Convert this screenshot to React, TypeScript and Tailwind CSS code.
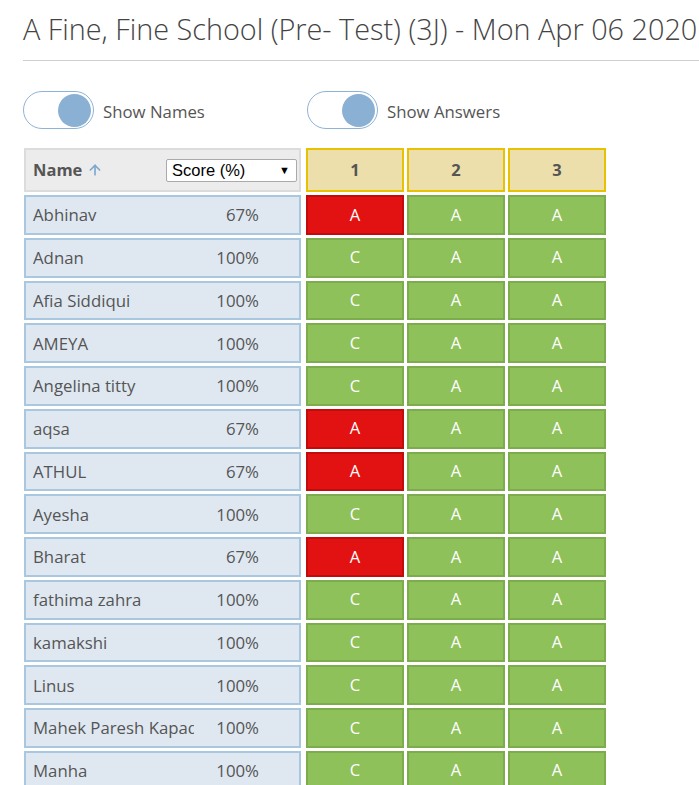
import { ArrowUp } from "lucide-react"

interface Row {
  name: string
  score: string
  answers: string[]
}

const rows: Row[] = [
  { name: "Abhinav", score: "67%", answers: ["A", "A", "A"] },
  { name: "Adnan", score: "100%", answers: ["C", "A", "A"] },
  { name: "Afia Siddiqui", score: "100%", answers: ["C", "A", "A"] },
  { name: "AMEYA", score: "100%", answers: ["C", "A", "A"] },
  { name: "Angelina titty", score: "100%", answers: ["C", "A", "A"] },
  { name: "aqsa", score: "67%", answers: ["A", "A", "A"] },
  { name: "ATHUL", score: "67%", answers: ["A", "A", "A"] },
  { name: "Ayesha", score: "100%", answers: ["C", "A", "A"] },
  { name: "Bharat", score: "67%", answers: ["A", "A", "A"] },
  { name: "fathima zahra", score: "100%", answers: ["C", "A", "A"] },
  { name: "kamakshi", score: "100%", answers: ["C", "A", "A"] },
  { name: "Linus", score: "100%", answers: ["C", "A", "A"] },
  { name: "Mahek Paresh Kapadia", score: "100%", answers: ["C", "A", "A"] },
  { name: "Manha", score: "100%", answers: ["C", "A", "A"] },
]

// correct answer for each question
const key = ["C", "A", "A"]

function Toggle({ label }: { label: string }) {
  return (
    <div className="flex items-center">
      <div className="w-[71px] h-[38px] rounded-full border border-[#8fb3d4] bg-white flex items-center justify-end pr-[2px]">
        <div className="w-[33px] h-[33px] rounded-full bg-[#8ab0d3]" />
      </div>
      <span className="ml-[9px] text-[16.8px] text-[#555] leading-[24px] pt-[3px]">{label}</span>
    </div>
  )
}

export default function App() {
  return (
    <div className="w-[699px] h-[785px] overflow-hidden bg-white font-['Open_Sans',sans-serif]">
      <div className="pl-[23px] pt-[9px]">
        <h1 className="text-[28.8px] font-light text-[#444] whitespace-nowrap leading-[40px]">
          A Fine, Fine School (Pre- Test) (3J) - Mon Apr 06 2020
        </h1>
        <div className="mt-[11px] h-px bg-[#cfcfcf]" />

        {/* toggles */}
        <div className="flex mt-[30px]">
          <div className="w-[284px]">
            <Toggle label="Show Names" />
          </div>
          <Toggle label="Show Answers" />
        </div>

        {/* results grid */}
        <div className="mt-[19px] ml-px flex flex-col gap-[3px]">
          <div className="flex h-[44px]">
            <div className="w-[277px] bg-[#ececec] border-2 border-[#dcdcdc] flex items-center justify-between pl-[7px] pr-[2px]">
              <div className="flex items-center text-[16.5px] font-bold text-[#555]">
                Name
                <ArrowUp className="w-[16px] h-[16px] ml-[5px] text-[#7fa8cf]" strokeWidth={2.5} />
              </div>
              <div className="w-[131px] h-[23px] bg-white border border-[#aaa] rounded-[2px] flex items-center justify-between pl-[5px] pr-[6px] font-['Liberation_Sans',sans-serif] text-[16.5px] text-black">
                <span>Score (%)</span>
                <span className="text-[11px]">▼</span>
              </div>
            </div>
            <div className="flex gap-[3px] ml-[5px]">
              {[1, 2, 3].map((q) => (
                <div
                  key={q}
                  className="w-[98px] bg-[#ecdfab] border-2 border-[#e8c100] flex items-center justify-center text-[16.5px] font-bold text-[#555]"
                >
                  {q}
                </div>
              ))}
            </div>
          </div>

          {rows.map((row) => (
            <div key={row.name} className="flex h-[39.77px]">
              <div className="w-[277px] bg-[#dfe8f1] border-2 border-[#a9c8e0] flex items-center pl-[7px] text-[16.8px] text-[#555]">
                <span className="w-[161px] overflow-hidden whitespace-nowrap">{row.name}</span>
                <span className="w-[65px] text-right">{row.score}</span>
              </div>
              <div className="flex gap-[3px] ml-[5px]">
                {row.answers.map((a, i) => (
                  <div
                    key={i}
                    className={`w-[98px] border-2 flex items-center justify-center text-[16.5px] text-white ${
                      a === key[i] ? "bg-[#8fc15b] border-[#7cac4b]" : "bg-[#e31212] border-[#c20b0b]"
                    }`}
                  >
                    {a}
                  </div>
                ))}
              </div>
            </div>
          ))}
        </div>
      </div>
    </div>
  )
}
